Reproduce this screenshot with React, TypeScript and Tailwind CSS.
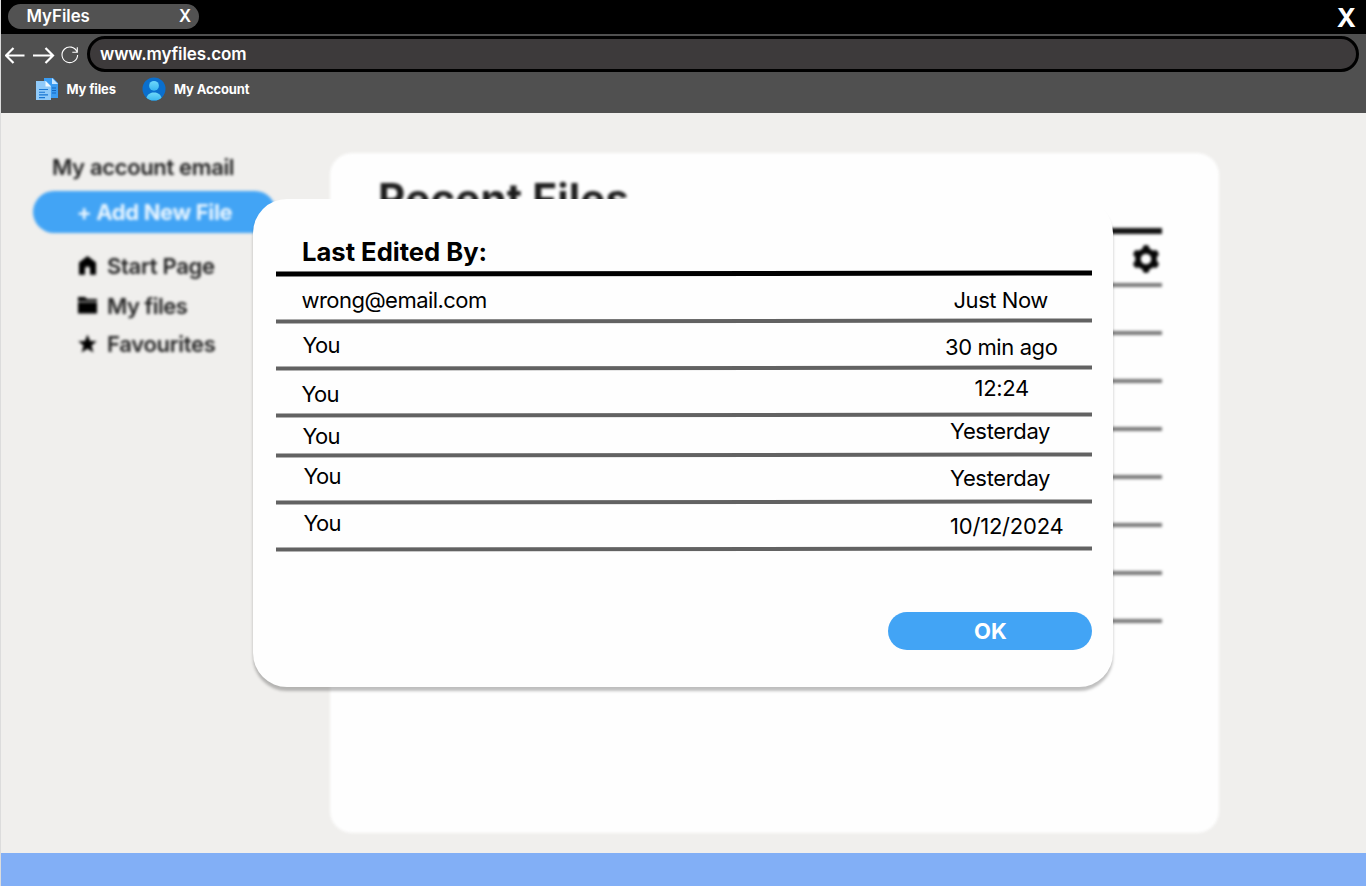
import React from "react";

type Entry = {
  who: string;
  when: string;
  row: string;
  left: string;
  right: string;
};

const entries: Entry[] = [
  { who: "wrong@email.com", when: "Just Now", row: "h-[43px]", left: "pl-[25.5px] pt-[10px] tracking-[-0.54px]", right: "pl-[677.5px] pt-[10px] tracking-[-0.45px]" },
  { who: "You", when: "30 min ago", row: "h-[43px]", left: "pl-[26.5px] pt-[8px] tracking-[-0.7px]", right: "pl-[669px] pt-[10px] tracking-[-0.4px]" },
  { who: "You", when: "12:24", row: "h-[43px]", left: "pl-[25.5px] pt-[10px] tracking-[-0.7px]", right: "pl-[698.5px] pt-[4px] tracking-[-0.3px]" },
  { who: "You", when: "Yesterday", row: "h-[36px]", left: "pl-[26.5px] pt-[5.4px] tracking-[-0.7px]", right: "pl-[674px] tracking-[-0.35px]" },
  { who: "You", when: "Yesterday", row: "h-[43px]", left: "pl-[27.5px] pt-[5px] tracking-[-0.7px]", right: "pl-[674px] pt-[7px] tracking-[-0.35px]" },
  { who: "You", when: "10/12/2024", row: "h-[43px]", left: "pl-[27.5px] pt-[5px] tracking-[-0.7px]", right: "pl-[674px] pt-[8px] tracking-[-0.2px]" },
];

const fileRows = [1, 2, 3, 4, 5, 6, 7, 8];

function DocumentsIcon() {
  return (
    <svg className="block h-6 w-6 shrink-0" viewBox="0 0 24 24">
      <path d="M9 1h9l5 5v15H9z" fill="#3b9cf2" />
      <path d="M17 1v6h6z" fill="#c9e6ff" />
      <path d="M17 11h4M17 13.500h4M17 16h4" stroke="#1467c0" strokeWidth="1" />
      <path d="M1 4h10l5 5v14H1z" fill="#90caf9" />
      <path d="M10.500 4v5.500H16z" fill="#eef8ff" />
      <path d="M4 12.500h9M4 15.200h6M4 17.900h9M4 20.600h6" stroke="#1976d2" strokeWidth="1.1" />
    </svg>
  );
}

function AccountIcon() {
  return (
    <svg className="block h-6 w-6 shrink-0" viewBox="0 0 24 24">
      <defs>
        <linearGradient id="person" x1="0" y1="0" x2="0" y2="1">
          <stop offset="0" stopColor="#6fd8f9" />
          <stop offset="1" stopColor="#38b6f1" />
        </linearGradient>
        <clipPath id="disc"><circle cx="12" cy="12" r="11.5" /></clipPath>
      </defs>
      <circle cx="12" cy="12" r="11.5" fill="#0a6fce" />
      <circle cx="12" cy="8.8" r="4.9" fill="url(#person)" />
      <path d="M4 24C4 18 7.500 15.400 12 15.400S20 18 20 24z" fill="url(#person)" clipPath="url(#disc)" />
    </svg>
  );
}

function BrowserChrome() {
  return (
    <header className="font-semibold text-white">
      <div className="flex h-[34px] items-start justify-between bg-black pl-[7px]">
        <div className="mt-1 flex h-[25px] w-[191px] items-center justify-between rounded-full bg-[#525252] pl-[18.5px] pr-[8px] text-[16.8px] leading-[25px]">
          <span>MyFiles</span>
          <span>X</span>
        </div>
        <span className="mr-[10px] text-[26px] font-bold leading-[35px]">X</span>
      </div>
      <div className="h-[79px] bg-[#505050]">
        <div className="flex h-[40px] items-start pl-[4px] pt-[2px]">
          <svg className="mt-[9px] block h-[22px] w-[76px] shrink-0" viewBox="0 0 76 22" fill="none" stroke="#fff">
            <path d="M19.500 10.500H1M8.500 3l-7.500 7.500 7.500 7.500M28 10.500h19.500M40.500 3l7.500 7.500-7.500 7.500" strokeWidth="2.2" />
            <path d="M72 6.800a7.800 7.800 0 1 0 .6 3.200" strokeWidth="1.100" />
            <path d="M72.300 2.200v5h-5" strokeWidth="1.100" />
          </svg>
          <div className="ml-[6px] flex h-[36px] w-[1272px] items-center rounded-full border-[3px] border-black bg-[#3d3a3b] pl-[10px] pt-[1.5px] text-[17px] tracking-[-0.12px]">
            www.myfiles.com
          </div>
        </div>
        <nav className="flex h-[29px] items-center pl-[34px] text-[13px] font-bold tracking-[-0.15px]">
          <DocumentsIcon />
          <span className="ml-[7.5px] w-[75px] pt-[1.5px]">My files</span>
          <AccountIcon />
          <span className="ml-[8.5px] pt-[1.5px]">My Account</span>
        </nav>
      </div>
    </header>
  );
}

function Sidebar() {
  return (
    <aside className="w-[329px] shrink-0 pl-[32px] pt-[38px] font-semibold text-[#222]">
      <div className="pl-[19px] text-[22px] leading-[32px] tracking-[-0.35px]">My account email</div>
      <div className="mt-[8px] h-[42px] w-[243px] rounded-full bg-[#42a4f5] text-center text-[22px] font-bold leading-[42px] tracking-[-0.35px] text-[#eaf6ff]">
        + Add New File
      </div>
      <ul className="pl-[44px] pt-[13px] text-[22px] tracking-[-0.3px]">
        <li className="flex h-[40px] items-center gap-[10px]">
          <svg className="h-[20px] w-[20px]" viewBox="0 0 20 20"><path d="M10.500 0L2 6.500v12.200h6V13a2.500 2.500 0 0 1 5 0v5.700h6V6.500z" fill="#000" /></svg>
          Start Page
        </li>
        <li className="flex h-[40px] items-center gap-[10px] tracking-[-0.5px]">
          <svg className="h-[20px] w-[20px]" viewBox="0 0 20 20"><path d="M1 1h7l2 2h10v2.200H1zM1 6.200h19v11.300H1z" fill="#000" /></svg>
          My files
        </li>
        <li className="flex h-[37px] items-center gap-[10px]">
          <svg className="h-[20px] w-[20px]" viewBox="0 0 20 20"><path d="M10.500 -.5l2.600 6.400 6.700.3-5.300 4.400 1.900 7-5.900-3.900-5.900 3.900 1.900-7L1.200 6.200l6.700-.3z" fill="#000" /></svg>
          Favourites
        </li>
      </ul>
    </aside>
  );
}

function RecentFiles() {
  return (
    <section className="mt-[40px] h-[680px] w-[889px] rounded-[22px] bg-[#fefefe] pl-[48px] pt-[21px]">
      <h1 className="h-[54px] text-[42px] font-bold leading-[50px] tracking-[0.15px] text-[#1c1c1c]">Recent Files</h1>
      <div className="w-[784px]">
        <div className="h-[6px] bg-[#111]" />
        <div className="flex h-[48.5px] items-center justify-end pr-[2px] pt-[1.5px]">
          <svg className="h-[28px] w-[28px]" viewBox="0 0 28 28">
            <g fill="#050505">
              <circle cx="14" cy="14" r="10.800" />
              <path d="M11.200 1q2.800-2 5.600 0l1.700 6h-9zM11.200 27q2.800 2 5.600 0l1.700-6h-9z" />
              <path d="M11.200 1q2.800-2 5.600 0l1.700 6h-9zM11.200 27q2.800 2 5.600 0l1.700-6h-9z" transform="rotate(60 14 14)" />
              <path d="M11.200 1q2.800-2 5.600 0l1.700 6h-9zM11.200 27q2.800 2 5.600 0l1.700-6h-9z" transform="rotate(120 14 14)" />
            </g>
            <circle cx="14" cy="14" r="5.300" fill="#fefefe" />
          </svg>
        </div>
        {fileRows.map((n) => (
          <div key={n} className="h-[48px] border-t-4 border-[#777]" />
        ))}
      </div>
    </section>
  );
}

function LastEditedDialog() {
  return (
    <div role="dialog" className="absolute left-[252px] top-[199px] h-[488px] w-[860px] rounded-[34px] bg-[#fefefe] pl-[23px] pr-[21px] pt-[38px] text-black shadow-[0_4px_3px_rgba(0,0,0,0.25)]">
      <h2 className="h-[34px] pl-[26px] text-[25.6px] font-bold leading-[29px]">Last Edited By:</h2>
      <div className="h-[5px] -rotate-[0.07deg] bg-black" />
      <div className="text-[22px] leading-[28px]">
        {entries.map((e, i) => (
          <div key={i}>
            <div className={"grid " + e.row}>
              <span className={"col-start-1 row-start-1 " + e.left}>{e.who}</span>
              <span className={"col-start-1 row-start-1 " + e.right}>{e.when}</span>
            </div>
            <div className="h-[4px] -rotate-[0.07deg] bg-[#626262]" />
          </div>
        ))}
      </div>
      <button className="ml-auto mt-[61px] block h-[38px] w-[204px] rounded-full bg-[#42a4f5] pl-px text-[22px] font-bold leading-[38px] text-white">
        OK
      </button>
    </div>
  );
}

export default function App() {
  return (
    <div className="relative h-[886px] w-[1366px] overflow-hidden border-l border-[#dcdcdc] bg-[#f0efed] font-['Inter','Liberation_Sans',sans-serif]">
      <BrowserChrome />
      <main className="flex h-[740px] blur-[1.8px]">
        <Sidebar />
        <RecentFiles />
      </main>
      <footer className="h-[33px] bg-[#82aff6]" />
      <LastEditedDialog />
    </div>
  );
}
